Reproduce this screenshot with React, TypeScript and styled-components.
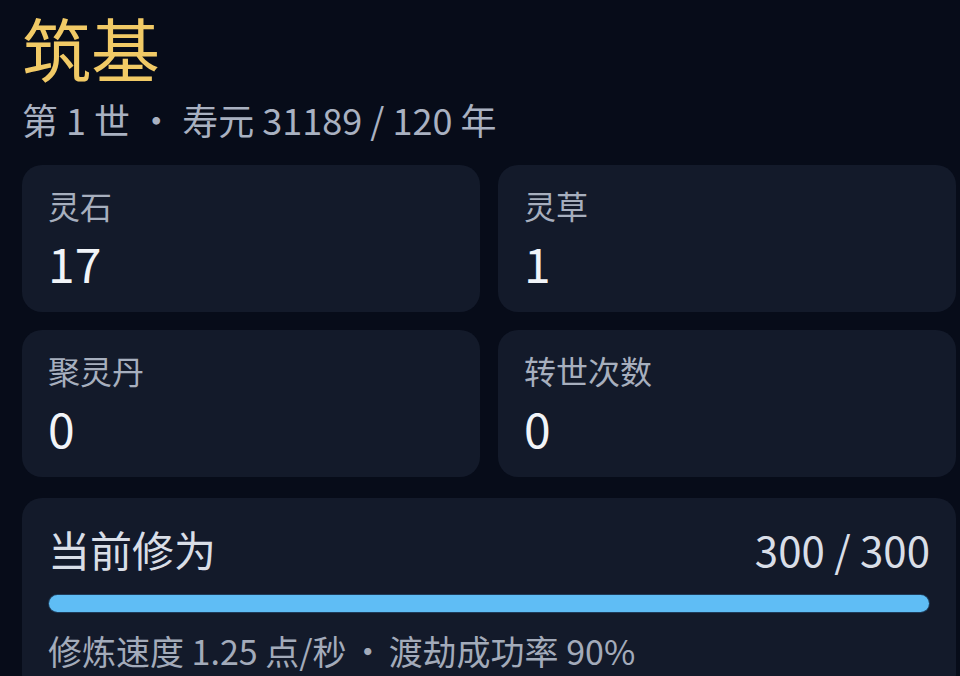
import { createGlobalStyle, styled } from 'styled-components';

const GlobalStyle = createGlobalStyle`
  html, body {
    margin: 0;
    padding: 0;
    background: #070c19;
  }

  body {
    font-family: "Noto Sans CJK SC", "Noto Sans", sans-serif;
    color: #e9edf4;
    overflow: hidden;
  }
`;

const Page = styled.main`
  min-height: 676px;
  padding: 3px 4px 0 22px;
  box-sizing: border-box;
`;

const Header = styled.header`
  display: flex;
  flex-direction: column;
  gap: 3px;
  margin-bottom: 21px;
`;

const Realm = styled.h1`
  margin: 0;
  font-size: 69px;
  line-height: 88px;
  font-weight: 400;
  color: #f1ca66;
`;

const Lifespan = styled.p`
  margin: 0;
  font-size: 36px;
  line-height: 50px;
  color: #a9b1c1;
`;

const Sep = styled.span`
  margin: 0 4px;
`;

const StatGrid = styled.section`
  display: grid;
  grid-template-columns: 1fr 1fr;
  gap: 18px;
  margin-bottom: 21px;
`;

const Card = styled.div`
  background: #131a2a;
  border-radius: 20px;
`;

const StatCard = styled(Card)`
  display: flex;
  flex-direction: column;
  gap: 3px;
  padding: 18px 26px 19px;
`;

const StatLabel = styled.span`
  font-size: 32px;
  line-height: 45px;
  color: #a7afbe;
`;

const StatValue = styled.span`
  font-size: 48px;
  line-height: 62px;
  color: #f1f4f8;
`;

const ProgressCard = styled(Card)`
  padding: 23px 26px 20px;
`;

const ProgressHead = styled.div`
  display: flex;
  justify-content: space-between;
  align-items: baseline;
  margin-bottom: 18px;
`;

const ProgressTitle = styled.span`
  font-size: 42px;
  line-height: 55px;
  color: #d9dee7;
`;

const ProgressCount = styled.span`
  font-size: 42px;
  line-height: 55px;
  color: #d9dee7;
`;

const Track = styled.div`
  height: 19px;
  border-radius: 10px;
  background: #1f3c5a;
  padding: 1px;
  box-sizing: border-box;
  margin-bottom: 14px;
`;

const Fill = styled.div`
  height: 100%;
  border-radius: 9px;
  background: #5fbdf5;
`;

const ProgressNote = styled.p`
  margin: 0;
  font-size: 34px;
  line-height: 48px;
  color: #a3abba;
`;

const stats = [
  { label: '灵石', value: 17 },
  { label: '灵草', value: 1 },
  { label: '聚灵丹', value: 0 },
  { label: '转世次数', value: 0 },
];

export default function App() {
  const current = 300;
  const max = 300;
  const pct = Math.min(100, (current / max) * 100);

  return (
    <>
      <GlobalStyle />
      <Page>
        <Header>
          <Realm>筑基</Realm>
          <Lifespan>第 1 世 · 寿元 31189 / 120 年</Lifespan>
        </Header>
        <StatGrid>
          {stats.map((s) => (
            <StatCard key={s.label}>
              <StatLabel>{s.label}</StatLabel>
              <StatValue>{s.value}</StatValue>
            </StatCard>
          ))}
        </StatGrid>
        <ProgressCard>
          <ProgressHead>
            <ProgressTitle>当前修为</ProgressTitle>
            <ProgressCount>
              {current} / {max}
            </ProgressCount>
          </ProgressHead>
          <Track>
            <Fill style={{ width: `${pct}%` }} />
          </Track>
          <ProgressNote>
            修炼速度 1.25 点/秒<Sep>·</Sep>渡劫成功率 90%
          </ProgressNote>
        </ProgressCard>
      </Page>
    </>
  );
}
